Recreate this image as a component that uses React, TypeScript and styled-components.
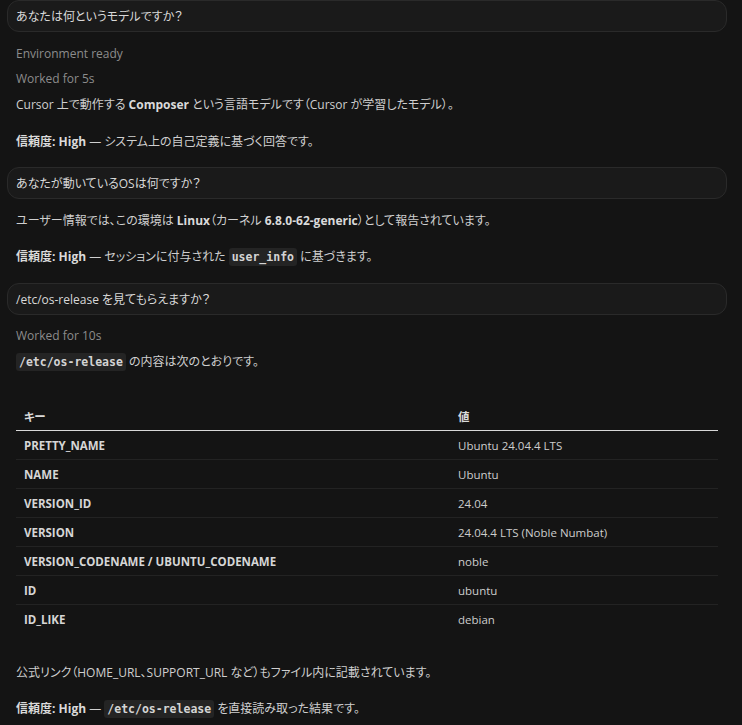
import React from "react";
import styled, { createGlobalStyle } from "styled-components";

type Row = { key: string; value: string };

const rows: Row[] = [
  { key: "PRETTY_NAME", value: "Ubuntu 24.04.4 LTS" },
  { key: "NAME", value: "Ubuntu" },
  { key: "VERSION_ID", value: "24.04" },
  { key: "VERSION", value: "24.04.4 LTS (Noble Numbat)" },
  { key: "VERSION_CODENAME / UBUNTU_CODENAME", value: "noble" },
  { key: "ID", value: "ubuntu" },
  { key: "ID_LIKE", value: "debian" },
];

/* ---------------- Global ---------------- */

const GlobalStyle = createGlobalStyle`
  html, body {
    margin: 0;
    background: #141414;
  }
  body {
    font-family: "Open Sans", "Noto Sans CJK JP", sans-serif;
    font-size: 12px;
    font-feature-settings: "palt";
    color: #cfcfcf;
  }
`;

/* ---------------- Layout ---------------- */

const Page = styled.div`
  padding: 0 15px 0 7px;
  height: 725px;
  overflow: hidden;
`;

const Bubble = styled.div<{ $gap?: number }>`
  margin-top: ${(p) => p.$gap ?? 0}px;
  height: 30px;
  display: flex;
  align-items: center;
  padding: 0 8px;
  background: #1a1a1a;
  border: 1px solid #2a2a2a;
  border-radius: 12px;
  color: #d8d8d8;
`;

const Answer = styled.div`
  padding-left: 9px;
`;

const Status = styled.div<{ $gap: number }>`
  margin-top: ${(p) => p.$gap}px;
  line-height: 20px;
  color: #8c8c8c;
`;

const Para = styled.p<{ $gap: number }>`
  margin: ${(p) => p.$gap}px 0 0;
  line-height: 20px;
`;

const Strong = styled.b`
  font-weight: 700;
  color: #dadada;
`;

const Code = styled.code`
  font-family: "DejaVu Sans Mono", "Liberation Mono", monospace;
  font-weight: 700;
  font-size: 11.5px;
  background: #242424;
  color: #d4d4d4;
  border-radius: 3px;
  padding: 2px 3px;
`;

/* ---------------- Table ---------------- */

const Table = styled.div`
  margin-top: 30px;
  display: grid;
  grid-template-columns: 434px 1fr;
  width: 702px;
`;

const HeadCell = styled.div`
  height: 28px;
  display: flex;
  align-items: center;
  padding-left: 8px;
  font-size: 11.5px;
  font-weight: 700;
  color: #dadada;
  border-bottom: 1px solid #d8d8d8;
`;

const Cell = styled.div<{ $key?: boolean; $last?: boolean }>`
  height: 28px;
  display: flex;
  align-items: center;
  padding-left: 8px;
  font-size: 11.5px;
  font-weight: ${(p) => (p.$key ? 700 : 400)};
  color: ${(p) => (p.$key ? "#d6d6d6" : "#cdcdcd")};
  border-bottom: 1px solid ${(p) => (p.$last ? "transparent" : "#232323")};
`;

/* ---------------- Component ---------------- */

const App: React.FC = () => {
  return (
    <>
      <GlobalStyle />
      <Page>
        <Bubble>あなたは何というモデルですか？</Bubble>
        <Answer>
          <Status $gap={12}>Environment ready</Status>
          <Status $gap={5}>Worked for 5s</Status>
          <Para $gap={6}>
            Cursor 上で動作する <Strong>Composer</Strong> という言語モデルです（Cursor が学習したモデル）。
          </Para>
          <Para $gap={17}>
            <Strong>信頼度: High</Strong> — システム上の自己定義に基づく回答です。
          </Para>
        </Answer>

        <Bubble $gap={15}>あなたが動いているOSは何ですか？</Bubble>
        <Answer>
          <Para $gap={12}>
            ユーザー情報では、この環境は <Strong>Linux</Strong>（カーネル <Strong>6.8.0-62-generic</Strong>）として報告されています。
          </Para>
          <Para $gap={16}>
            <Strong>信頼度: High</Strong> — セッションに付与された <Code>user_info</Code> に基づきます。
          </Para>
        </Answer>

        <Bubble $gap={16}>/etc/os-release を見てもらえますか？</Bubble>
        <Answer>
          <Status $gap={11}>Worked for 10s</Status>
          <Para $gap={6}>
            <Code>/etc/os-release</Code> の内容は次のとおりです。
          </Para>

          <Table>
            <HeadCell>キー</HeadCell>
            <HeadCell>値</HeadCell>
            {rows.map((r, i) => (
              <React.Fragment key={r.key}>
                <Cell $key $last={i === rows.length - 1}>
                  {r.key}
                </Cell>
                <Cell $last={i === rows.length - 1}>{r.value}</Cell>
              </React.Fragment>
            ))}
          </Table>

          <Para $gap={29}>
            公式リンク（HOME_URL、SUPPORT_URL など）もファイル内に記載されています。
          </Para>
          <Para $gap={16}>
            <Strong>信頼度: High</Strong> — <Code>/etc/os-release</Code> を直接読み取った結果です。
          </Para>
        </Answer>
      </Page>
    </>
  );
};

export default App;
